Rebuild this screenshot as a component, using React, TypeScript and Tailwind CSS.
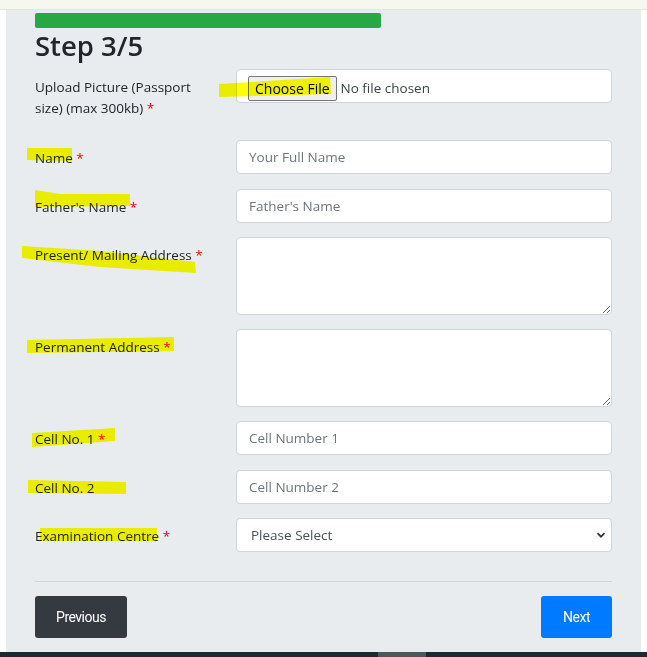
import React from "react";

const Req = () => <span className="text-[#ff0000]">&nbsp;*</span>;

function Row({
  label,
  children,
  className = "mb-[14.5px]",
}: {
  label: React.ReactNode;
  children: React.ReactNode;
  className?: string;
}) {
  return (
    <div className={"grid grid-cols-[172px_376px] gap-x-[29px] " + className}>
      <label className="pt-[8px] pb-[5px] text-[13.5px] leading-[21px] text-[#212529]">{label}</label>
      <div>{children}</div>
    </div>
  );
}

const inputCls =
  "block w-full h-[34px] bg-white border border-[#ced4da] rounded-[4px] px-[12px] text-[13.5px] text-[#495057] placeholder:text-[#6c757d] outline-none";

export default function App() {
  return (
    <div
      className="relative w-[647px] h-[657px] bg-white overflow-hidden"
      style={{ fontFamily: '"Open Sans", "Noto Sans", sans-serif' }}
    >
      <div className="h-[10px] bg-[#f6f8ef] border-b border-[#e1e7d5]" />
      <div className="mx-[6px] h-[642px] bg-[#e9ecef] px-[29px] pt-[3px]">
        <div className="h-[15px] w-[346px] bg-[#28a745] rounded-[2px]" />
        <h2 className="text-[27.5px] leading-[34px] font-semibold text-[#212529] mb-[6px] mt-[1px]">
          Step 3/5
        </h2>

        <Row
          className="mb-[16px]"
          label={
            <>
              Upload Picture (Passport size) (max 300kb)
              <Req />
            </>
          }
        >
          <div className="flex items-center h-[34px] bg-white border border-[#ced4da] rounded-[4px] pl-[11px] pt-[4px]">
            <span className="inline-flex items-center h-[25px] px-[6px] border border-[#767676] rounded-[2px] bg-[#efefef] text-[14px] text-black">
              Choose File
            </span>
            <span className="ml-[4px] text-[13.5px] text-[#3c4146]">No file chosen</span>
          </div>
        </Row>

        <Row
          label={
            <>
              Name
              <Req />
            </>
          }
        >
          <input className={inputCls} placeholder="Your Full Name" />
        </Row>

        <Row
          label={
            <>
              Father's Name
              <Req />
            </>
          }
        >
          <input className={inputCls} placeholder="Father's Name" />
        </Row>

        <Row
          label={
            <>
              Present/ Mailing Address
              <Req />
            </>
          }
        >
          <textarea className="block w-full h-[77.5px] bg-white border border-[#ced4da] rounded-[4px] px-[12px] py-[6px] text-[13.5px] outline-none" />
        </Row>

        <Row
          label={
            <>
              Permanent Address
              <Req />
            </>
          }
        >
          <textarea className="block w-full h-[77.5px] bg-white border border-[#ced4da] rounded-[4px] px-[12px] py-[6px] text-[13.5px] outline-none" />
        </Row>

        <Row
          label={
            <>
              Cell No. 1
              <Req />
            </>
          }
        >
          <input className={inputCls} placeholder="Cell Number 1" />
        </Row>

        <Row label={<>Cell No. 2</>}>
          <input className={inputCls} placeholder="Cell Number 2" />
        </Row>

        <Row
          label={
            <>
              Examination Centre
              <Req />
            </>
          }
          className="mb-0"
        >
          <div className="flex items-center justify-between h-[34px] bg-white border border-[#ced4da] rounded-[4px] pl-[14px] pr-[5px] text-[13.5px] text-[#495057]">
            <span>Please Select</span>
            <svg width="10" height="10" viewBox="0 0 10 10" aria-hidden="true">
              <path d="M1.5 3.2 L5 6.7 L8.5 3.2" fill="none" stroke="#333" strokeWidth="1.8" />
            </svg>
          </div>
        </Row>

        <div className="mt-[29px] mb-[14px] border-t border-[#d2d4d7]" />

        <div className="flex justify-between">
          <button
            className="h-[42px] w-[92px] bg-[#343a40] text-white rounded-[3px] text-[14px] tracking-[-0.5px]"
            style={{ fontFamily: "Roboto, sans-serif" }}
          >
            Previous
          </button>
          <button
            className="h-[42px] w-[71px] bg-[#007bff] text-white rounded-[3px] text-[14px] tracking-[-0.5px]"
            style={{ fontFamily: "Roboto, sans-serif" }}
          >
            Next
          </button>
        </div>
      </div>
      <div className="flex h-[5px] bg-[#1b2a2e]">
        <div className="w-[378px]" />
        <div className="w-[48px] bg-[#4b5759]" />
      </div>

      <svg
        className="absolute left-0 top-0 pointer-events-none mix-blend-multiply"
        width="647"
        height="657"
        viewBox="0 0 647 657"
        aria-hidden="true"
      >
        <g fill="#ffff00">
          <polygon points="219,84 330,77 331,94 219,97" />
          <polygon points="27,148 72,148 72,161 27,160" />
          <polygon points="35,190 60,194 130,194 130,206 35,207" />
          <polygon points="22,246 100,251 195,262 196,273 100,267 22,258" />
          <polygon points="27,340 174,337 174,351 27,353" />
          <polygon points="32,433 115,428 115,441 32,447" />
          <polygon points="28,480 126,482 126,494 28,493" />
          <polygon points="40,528 157,528 157,541 40,541" />
        </g>
      </svg>
    </div>
  );
}
